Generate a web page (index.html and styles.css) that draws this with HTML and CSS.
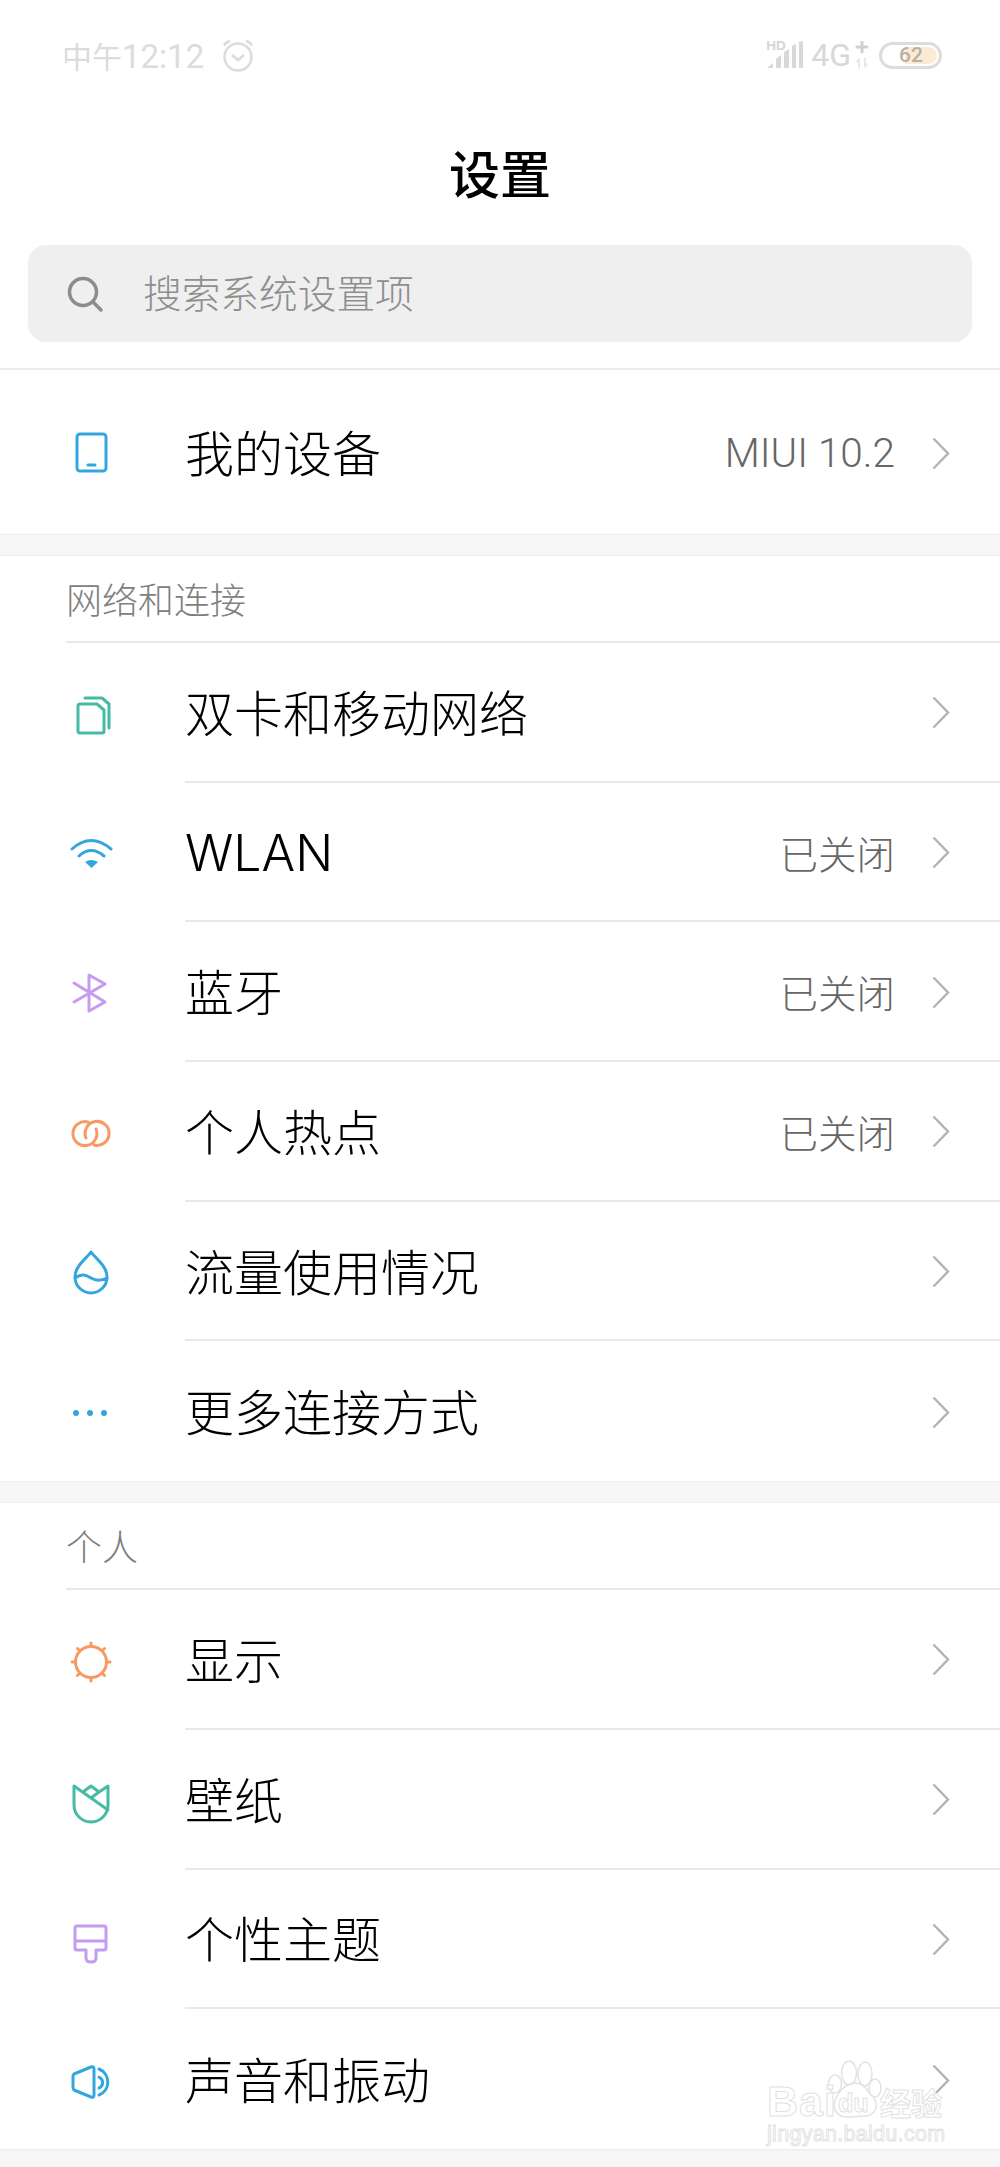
FILE: index.html
```html
<!DOCTYPE html>
<html lang="zh-CN">
<head>
<meta charset="utf-8">
<title>设置</title>
<link rel="stylesheet" href="styles.css">
</head>
<body>
<div class="page">
  <div class="status">
    <div class="status-left">
      <span class="clock">中午<span class="digits">12:12</span></span>
      <svg class="alarm" viewBox="0 0 34 34" width="34" height="34"><circle cx="17" cy="18" r="13.5"/><path d="M11 16l6 5 6-5M3 6.500Q5 3 9 2M31 6.500Q29 3 25 2"/></svg>
    </div>
    <div class="status-right">
      <span class="signal">
        <span class="hd">HD</span>
        <svg viewBox="0 0 38 28" width="38" height="28"><path d="M1 27l6-5v5zM10 27V18l5-4v13zM18 27V11l5-3v19zM26 27V5l4-2v24zM33 27V1l4-1v27z"/></svg>
      </span>
      <span class="net">4G</span>
      <span class="plus">
        <svg viewBox="0 0 16 28" width="16" height="28"><path class="p" d="M8 1v10M3 6h10"/><path class="a" d="M5 27v-9M5 18l-2 3M11 17v9M11 26l2-3"/></svg>
      </span>
      <span class="battery"><span class="fill"></span><span class="level">62</span></span>
    </div>
  </div>

  <h1 class="title">设置</h1>

  <div class="search">
    <svg viewBox="0 0 40 40" width="40" height="40"><circle cx="18" cy="18" r="13.500"/><path d="M28 28l8 8"/></svg>
    <span class="search-text">搜索系统设置项</span>
  </div>

  <section class="group first">
    <div class="row tall">
      <div class="icon blue"><svg viewBox="0 0 60 60"><rect x="17" y="12" width="29" height="37" rx="3"/><path d="M28 43h7"/></svg></div>
      <div class="body last"><span class="label">我的设备</span><span class="value big">MIUI 10.2</span><svg class="chev" viewBox="0 0 18 33"><path d="M1.500 1.500L16 16.500 1.500 31.500"/></svg></div>
    </div>
  </section>

  <div class="gap"></div>

  <section class="group">
    <div class="head"><span>网络和连接</span></div>
    <div class="row">
      <div class="icon green"><svg viewBox="0 0 60 60"><path d="M20 21h17l7 6v21q0 2-2 2H20q-2 0-2-2V23q0-2 2-2zM25 15h17l7 6v24"/></svg></div>
      <div class="body"><span class="label">双卡和移动网络</span><svg class="chev" viewBox="0 0 18 33"><path d="M1.500 1.500L16 16.500 1.500 31.500"/></svg></div>
    </div>
    <div class="row">
      <div class="icon blue"><svg viewBox="0 0 60 60"><path d="M12 26Q31 9 51 26M19 33Q31 22 44 33"/><path class="solid" d="M25 39Q31 35 38 39L31.500 45Z"/></svg></div>
      <div class="body"><span class="label latin">WLAN</span><span class="value">已关闭</span><svg class="chev" viewBox="0 0 18 33"><path d="M1.500 1.500L16 16.500 1.500 31.500"/></svg></div>
    </div>
    <div class="row">
      <div class="icon purple"><svg viewBox="0 0 60 60"><path d="M14 21L45 40 29 49V13L45 22 14 40"/></svg></div>
      <div class="body"><span class="label">蓝牙</span><span class="value">已关闭</span><svg class="chev" viewBox="0 0 18 33"><path d="M1.500 1.500L16 16.500 1.500 31.500"/></svg></div>
    </div>
    <div class="row">
      <div class="icon orange"><svg viewBox="0 0 60 60"><path d="M28 20A12 12 0 1 0 36 27M34 43A12 12 0 1 0 26 36"/></svg></div>
      <div class="body"><span class="label">个人热点</span><span class="value">已关闭</span><svg class="chev" viewBox="0 0 18 33"><path d="M1.500 1.500L16 16.500 1.500 31.500"/></svg></div>
    </div>
    <div class="row">
      <div class="icon blue"><svg viewBox="0 0 60 60"><path d="M31 10C26 17 15 24 15 35A16 16 0 0 0 47 35C47 24 36 17 31 10ZM15 36C22 31 26 33 31 36S41 39 47 36"/></svg></div>
      <div class="body"><span class="label">流量使用情况</span><svg class="chev" viewBox="0 0 18 33"><path d="M1.500 1.500L16 16.500 1.500 31.500"/></svg></div>
    </div>
    <div class="row">
      <div class="icon blue"><svg viewBox="0 0 60 60"><circle class="solid" cx="16" cy="32" r="3"/><circle class="solid" cx="30" cy="32" r="3"/><circle class="solid" cx="44" cy="32" r="3"/></svg></div>
      <div class="body last"><span class="label">更多连接方式</span><svg class="chev" viewBox="0 0 18 33"><path d="M1.500 1.500L16 16.500 1.500 31.500"/></svg></div>
    </div>
  </section>

  <div class="gap"></div>

  <section class="group">
    <div class="head"><span>个人</span></div>
    <div class="row">
      <div class="icon orange"><svg viewBox="0 0 60 60"><circle cx="31" cy="32" r="15.500"/><path d="M31 13v3M31 48v3M12 32h3M47 32h3M17.500 18.500l2 2M44.500 18.500l-2 2M17.500 45.500l2-2M44.500 45.500l-2-2"/></svg></div>
      <div class="body"><span class="label">显示</span><svg class="chev" viewBox="0 0 18 33"><path d="M1.500 1.500L16 16.500 1.500 31.500"/></svg></div>
    </div>
    <div class="row">
      <div class="icon green"><svg viewBox="0 0 60 60"><path d="M14 16V35A17 17 0 0 0 48 35V16L39 22 31 16 23 22M14 16L48 40M39 22L31 28"/></svg></div>
      <div class="body"><span class="label">壁纸</span><svg class="chev" viewBox="0 0 18 33"><path d="M1.500 1.500L16 16.500 1.500 31.500"/></svg></div>
    </div>
    <div class="row">
      <div class="icon purple"><svg viewBox="0 0 60 60"><path d="M17 17H44Q46 17 46 19V39Q46 41 44 41H36V49Q36 53 31 53 26 53 26 49V41H17Q15 41 15 39V19Q15 17 17 17ZM15 32H46"/></svg></div>
      <div class="body"><span class="label">个性主题</span><svg class="chev" viewBox="0 0 18 33"><path d="M1.500 1.500L16 16.500 1.500 31.500"/></svg></div>
    </div>
    <div class="row">
      <div class="icon blue"><svg viewBox="0 0 60 60"><path d="M13 27Q13 26 14 25L31 18Q34 17 34 20V46Q34 49 31 48L14 41Q13 40 13 38ZM39 20A14 14 0 0 1 39 46M39 28A6 6 0 0 1 39 39"/></svg></div>
      <div class="body last"><span class="label">声音和振动</span><svg class="chev" viewBox="0 0 18 33"><path d="M1.500 1.500L16 16.500 1.500 31.500"/></svg></div>
    </div>
  </section>

  <div class="tail"></div>

  <div class="mark">
    <svg class="paw" viewBox="0 0 60 62" width="60" height="62"><ellipse cx="7" cy="26" rx="6.500" ry="9"/><ellipse cx="21" cy="15" rx="7.500" ry="12"/><ellipse cx="37" cy="16" rx="7" ry="12"/><ellipse cx="47" cy="30" rx="6" ry="9"/><path d="M27 25Q36 25 41 35 50 42 48 50 44 60 32 58 24 60 13 58 2 52 9 38 15 26 27 25Z"/></svg>
    <span class="bai">Bai</span>
    <span class="du">du</span>
    <span class="jing">经验</span>
    <span class="url">jingyan.baidu.com</span>
  </div>
</div>
</body>
</html>
```
FILE: styles.css
```css
* { box-sizing: border-box; }
html, body { margin: 0; padding: 0; }
body {
  background: #fff;
  font-family: "Noto Sans CJK SC", "Roboto", sans-serif;
  color: #000;
}
.page {
  position: relative;
  width: 1000px;
  height: 2167px;
  overflow: hidden;
  background: #fff;
  display: flex;
  flex-direction: column;
}
.status {
  height: 110px;
  flex: none;
  display: flex;
  justify-content: space-between;
  align-items: center;
  padding: 0 58px 0 62px;
  color: #dcdcdc;
}
.status-left, .status-right { display: flex; align-items: center; }
.status-left { padding-top: 2px; }
.clock { font-family: "Noto Sans CJK SC", sans-serif; font-size: 30px; line-height: 40px; }
.digits { font-family: "Roboto", sans-serif; font-size: 33px; }
.alarm { margin-left: 17px; fill: none; stroke: #dcdcdc; stroke-width: 2.500; }
.signal { position: relative; width: 38px; height: 28px; margin-right: 7px; }
.signal svg { display: block; fill: #d8d8d8; }
.hd {
  position: absolute; left: 0; top: -1px;
  font: bold 13.500px/12px "Liberation Sans", sans-serif;
  color: #d4d4d4;
}
.net { font-family: "Roboto", sans-serif; font-weight: 400; font-size: 32px; line-height: 40px; color: #d8d8d8; }
.plus { margin-left: 3px; width: 16px; height: 28px; }
.plus svg { display: block; fill: none; stroke-linecap: round; }
.plus .p { stroke: #d0d0d0; stroke-width: 3; }
.plus .a { stroke: #e4e4e4; stroke-width: 1.500; }
.battery {
  position: relative;
  margin-left: 9px;
  width: 63px;
  height: 27px;
  border: 3px solid #dcdcdc;
  border-radius: 14px;
}
.fill {
  position: absolute; left: 23px; top: 2px; bottom: 2px; right: 2px;
  background: #fcebd2;
  border-radius: 0 10px 10px 0;
}
.level {
  position: absolute; left: 17px; top: 0;
  font: 500 21px/21px "Roboto", sans-serif;
  color: #b8b0a4;
}
.title {
  flex: none;
  margin: 0;
  height: 130px;
  text-align: center;
  font-size: 51px;
  font-weight: 500;
  line-height: 125px;
  color: #000;
}
.search {
  flex: none;
  margin: 5px 28px 26px;
  height: 97px;
  background: #efefef;
  border-radius: 18px;
  display: flex;
  align-items: center;
  padding-left: 37px;
  font-size: 38.700px;
  font-weight: 300;
  color: #8e8e8e;
}
.search-text { padding-bottom: 5px; }
.search svg { flex: none; margin-right: 38px; fill: none; stroke: #8c8c8c; stroke-width: 3.500; stroke-linecap: round; }
.group { flex: none; }
.first { border-top: 2px solid #ececec; }
.gap, .tail {
  flex: none;
  height: 22px;
  background: #f6f6f6;
  border-top: 1px solid #ececec;
  border-bottom: 1px solid #ececec;
}
.tail { flex: 1; border-bottom: 0; }
.head {
  height: 87px;
  margin-left: 66px;
  border-bottom: 2px solid #e8e8e8;
  display: flex;
  align-items: center;
  font-size: 36px;
  font-weight: 300;
  color: #808080;
  padding-bottom: 2px;
}
.row { height: 139.700px; display: flex; padding-left: 60px; }
.tall { height: 164px; }
.icon { flex: none; width: 60px; margin-right: 65px; display: flex; align-items: center; }
.icon svg { display: block; width: 60px; height: 60px; fill: none; stroke-width: 3; stroke-linecap: round; stroke-linejoin: round; }
.icon .solid { stroke: none; }
.blue svg { stroke: #33a6e0; }
.blue .solid { fill: #33a6e0; }
.green svg { stroke: #45bba3; }
.orange svg { stroke: #f59a65; }
.purple svg { stroke: #c49cf2; }
.body {
  flex: 1;
  min-width: 0;
  display: flex;
  align-items: center;
  padding-right: 50px;
  border-bottom: 2px solid #e8e8e8;
}
.body.last { border-bottom: 0; }
.label {
  flex: 1;
  font-family: "Noto Sans CJK SC", sans-serif;
  font-size: 49px;
  font-weight: 300;
  color: #000;
  padding-bottom: 3px;
}
.label.latin { font-family: "Inter", sans-serif; font-size: 50px; padding: 3px 0 0; }
.value {
  font-family: "Noto Sans CJK SC", sans-serif;
  font-size: 38.500px;
  font-weight: 300;
  color: #666;
  margin-right: 37px;
}
.value.big { font-family: "Roboto", sans-serif; font-size: 40.500px; padding-top: 2px; }
.chev { flex: none; width: 18px; height: 33px; margin-top: 2px; fill: none; stroke: #b4b4b4; stroke-width: 2.500; }
.mark {
  position: absolute;
  left: 760px;
  top: 2055px;
  width: 200px;
  height: 95px;
  font-family: "Liberation Sans", sans-serif;
  font-weight: bold;
  color: rgba(255, 255, 255, .75);
  -webkit-text-stroke: 1px #e2e2e2;
}
.paw { position: absolute; left: 68px; top: 3px; fill: rgba(255, 255, 255, .6); stroke: #e2e2e2; stroke-width: 1.500; }
.bai { position: absolute; left: 7px; top: 26px; font-size: 43px; line-height: 40px; letter-spacing: 1px; }
.du { position: absolute; left: 78px; top: 33px; font-size: 25px; line-height: 30px; }
.jing { position: absolute; left: 120px; top: 31px; font-size: 31px; line-height: 32px; font-family: "Noto Sans CJK SC", sans-serif; }
.url { position: absolute; left: 7px; top: 66px; font-size: 21.500px; line-height: 26px; font-weight: normal; letter-spacing: .3px; }
```
